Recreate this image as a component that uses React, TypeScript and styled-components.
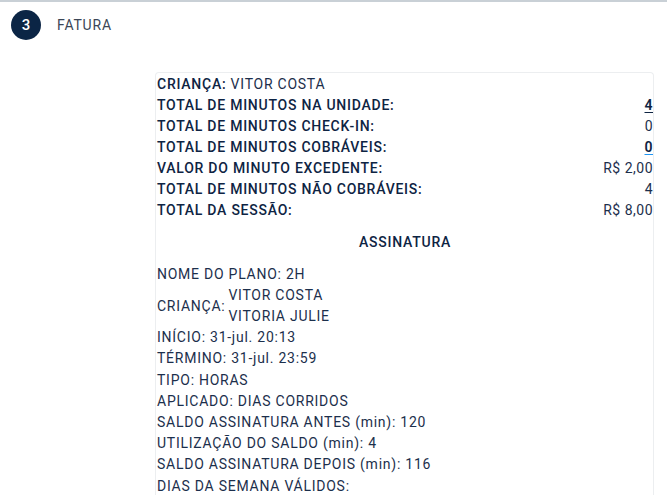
import React from "react";
import styled, { createGlobalStyle } from "styled-components";

const Global = createGlobalStyle`
  html, body { margin: 0; padding: 0; background: #fff; }
  body { font-family: Roboto, "Noto Sans", Arial, sans-serif; }
`;

const Page = styled.div`
  border-top: 2px solid #c9d0d6;
  min-height: 493px;
  overflow: hidden;
`;

const StepHeader = styled.div`
  display: flex;
  align-items: center;
  gap: 16px;
  padding: 8px 0 0 11px;
`;

const StepNumber = styled.div`
  width: 30px;
  height: 30px;
  border-radius: 50%;
  background: #0b2545;
  color: #fff;
  display: flex;
  align-items: center;
  justify-content: center;
  font-size: 15px;
  font-weight: 500;
`;

const StepTitle = styled.div`
  font-size: 14px;
  color: #3b4656;
  letter-spacing: 0.8px;
`;

const Card = styled.div`
  margin: 32px 0 0 155px;
  width: 496px;
  border: 1px solid #eceef0;
  border-bottom: none;
  border-radius: 4px 4px 0 0;
  padding: 1px 0 0 1px;
  color: #0e2443;
  font-size: 14px;
  line-height: 21px;
  letter-spacing: 0.75px;
`;

const Row = styled.div`
  display: flex;
  justify-content: space-between;
  height: 21px;
`;

const Label = styled.span`
  font-weight: 500;
`;

const Plain = styled.span`
  font-weight: 400;
  color: #1c2f4c;
`;

const Value = styled.span<{ $link?: "dark" | "blue" }>`
  font-weight: ${(p) => (p.$link ? 600 : 400)};
  color: ${(p) => (p.$link ? "#0e2443" : "#1c2f4c")};
  text-decoration: ${(p) => (p.$link ? "underline" : "none")};
  text-decoration-color: ${(p) => (p.$link === "blue" ? "#2196f3" : "#0e2443")};
  text-underline-offset: 2px;
  letter-spacing: 0.5px;
`;

const SectionTitle = styled.div`
  text-align: center;
  font-weight: 500;
  padding: 11px 0 0;
  height: 21px;
  margin-bottom: 11px;
`;

const Line = styled.div`
  color: #1c2f4c;
  height: 21.2px;
`;

const ChildBlock = styled.div`
  display: flex;
  align-items: center;
  color: #1c2f4c;
  gap: 3px;
`;

const Names = styled.div`
  display: flex;
  flex-direction: column;
  line-height: 21px;
`;

const summary: { label: string; value: string; link?: "dark" | "blue" }[] = [
  { label: "TOTAL DE MINUTOS NA UNIDADE:", value: "4", link: "dark" },
  { label: "TOTAL DE MINUTOS CHECK-IN:", value: "0" },
  { label: "TOTAL DE MINUTOS COBRÁVEIS:", value: "0", link: "blue" },
  { label: "VALOR DO MINUTO EXCEDENTE:", value: "R$ 2,00" },
  { label: "TOTAL DE MINUTOS NÃO COBRÁVEIS:", value: "4" },
  { label: "TOTAL DA SESSÃO:", value: "R$ 8,00" },
];

export default function App() {
  return (
    <>
      <Global />
      <Page>
        <StepHeader>
          <StepNumber>3</StepNumber>
          <StepTitle>FATURA</StepTitle>
        </StepHeader>
        <Card>
          <Row>
            <span>
              <Label>CRIANÇA:</Label> <Plain>VITOR COSTA</Plain>
            </span>
          </Row>
          {summary.map((r) => (
            <Row key={r.label}>
              <Label>{r.label}</Label>
              <Value $link={r.link}>{r.value}</Value>
            </Row>
          ))}
          <SectionTitle>ASSINATURA</SectionTitle>
          <Line>NOME DO PLANO: 2H</Line>
          <ChildBlock>
            <span>CRIANÇA:</span>
            <Names>
              <span>VITOR COSTA</span>
              <span>VITORIA JULIE</span>
            </Names>
          </ChildBlock>
          <Line>INÍCIO: 31-jul. 20:13</Line>
          <Line>TÉRMINO: 31-jul. 23:59</Line>
          <Line>TIPO: HORAS</Line>
          <Line>APLICADO: DIAS CORRIDOS</Line>
          <Line>SALDO ASSINATURA ANTES (min): 120</Line>
          <Line>UTILIZAÇÃO DO SALDO (min): 4</Line>
          <Line>SALDO ASSINATURA DEPOIS (min): 116</Line>
          <Line>DIAS DA SEMANA VÁLIDOS:</Line>
          <Line>&nbsp;</Line>
        </Card>
      </Page>
    </>
  );
}
